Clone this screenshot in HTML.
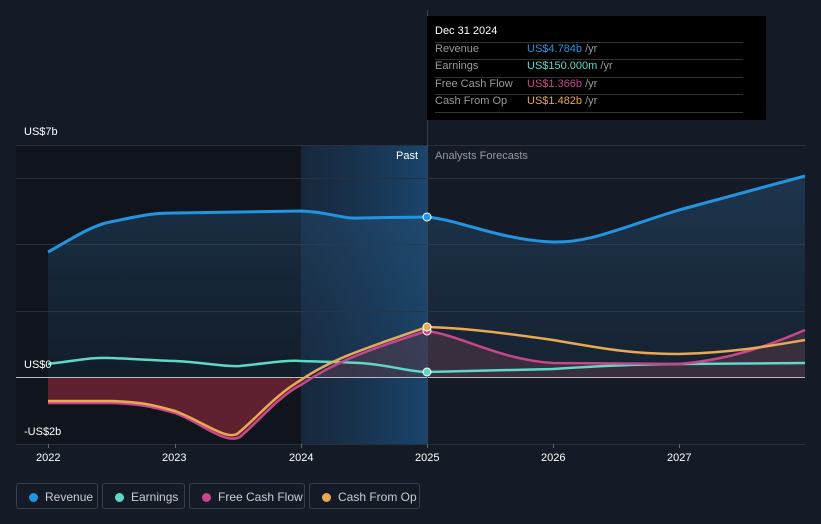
<!DOCTYPE html><html><head><style>
body{margin:0;width:821px;height:524px;background:#151b26;font-family:"Liberation Sans",sans-serif;overflow:hidden;position:relative}
.t{position:absolute;font-size:11px;color:#fff}
.tip{position:absolute;left:427px;top:16px;width:339px;height:104px;background:#000}
.tip div{position:absolute;left:8px;font-size:11px;color:#999}
.tip .l{height:1px;background:#333;width:308px}
.leg{position:absolute;top:483px;height:26px;border:1px solid #3a404b;border-radius:3px;color:#ccc;font-size:12px;line-height:26px;box-sizing:border-box}
.leg i{position:absolute;left:12px;top:9px;width:9px;height:9px;border-radius:50%}
.leg span{position:absolute;left:28px}
</style></head><body>
<svg width="821" height="524" style="position:absolute;left:0;top:0">
<defs><linearGradient id="hb" x1="0" x2="1"><stop offset="0" stop-color="#1a3a5a" stop-opacity=".4"/><stop offset="1" stop-color="#1a4a75" stop-opacity=".9"/></linearGradient>
<linearGradient id="rv" x1="0" y1="0" x2="0" y2="1"><stop offset="0" stop-color="#2a5a85" stop-opacity=".7"/><stop offset="1" stop-color="#1a3550" stop-opacity=".45"/></linearGradient></defs>
<rect x="16" y="145" width="285" height="299" fill="#10151d"/>
<rect x="301" y="145" width="126" height="299" fill="url(#hb)"/>
<g stroke="#2a303b" stroke-width="1"><line x1="16" y1="145.5" x2="805" y2="145.5"/><line x1="16" y1="178.5" x2="805" y2="178.5"/><line x1="16" y1="244.5" x2="805" y2="244.5"/><line x1="16" y1="311.5" x2="805" y2="311.5"/><line x1="16" y1="444.5" x2="805" y2="444.5"/></g>
<path d="M48,252 C70,240 90,226 110,222 C140,216 150,213 175,213 L301,211 C330,212 340,219 360,218 L427,217 C460,220 500,240 553,242 C590,243 620,228 679,210 L805,176 L805,377 L48,377Z" fill="url(#rv)" opacity=".6"/>
<path d="M48,403 L110,403 C140,404 150,406 175,413 C200,422 225,445 240,437 C260,420 280,395 301,385 L301,377 L48,377Z" fill="#7a2535" opacity=".75"/>
<path d="M301,385 C330,365 360,352 427,330 C460,335 500,360 553,363 L679,364 C730,360 770,345 805,330 L805,377 L301,377Z" fill="#5a3a48" opacity=".5"/>
<line x1="16" y1="377.5" x2="805" y2="377.5" stroke="#b8bcc2"/>
<line x1="427.5" y1="10" x2="427.5" y2="444" stroke="#3a4250"/>
<path d="M48,252 C70,240 90,226 110,222 C140,216 150,213 175,213 L301,211 C330,212 340,219 360,218 L427,217 C460,220 500,240 553,242 C590,243 620,228 679,210 L805,176" fill="none" stroke="#2394df" stroke-width="3"/>
<path d="M48,364 C80,360 95,357 110,358 C140,359 160,361 175,361 C210,363 225,367 240,366 C270,363 285,360 301,361 C330,362 345,362 360,363 C390,365 410,372 427,372 L553,369 C600,366 640,364 679,364 L805,363" fill="none" stroke="#5fd8c8" stroke-width="2.5"/>
<path d="M48,403 L110,403 C140,404 150,406 175,413 C200,422 225,445 240,437 C260,420 280,395 301,385 C330,365 360,352 427,331 C460,335 500,360 553,363 L679,364 C730,360 770,345 805,330" fill="none" stroke="#c8478a" stroke-width="2.5"/>
<path d="M48,401 L110,401 C140,402 150,404 175,411 C200,420 225,440 237,434 C255,420 275,395 301,380 C330,360 360,350 427,327 C460,328 490,331 553,340 C600,348 630,354 679,354 C730,353 770,346 805,340" fill="none" stroke="#e8a955" stroke-width="2.5"/>
<circle cx="427" cy="217" r="4" fill="#2394df" stroke="#fff"/>
<circle cx="427" cy="372" r="4" fill="#5fd8c8" stroke="#fff"/>
<circle cx="427" cy="331" r="4" fill="#c8478a" stroke="#fff"/>
<circle cx="427" cy="327" r="4" fill="#e8a955" stroke="#fff"/>
<g stroke="#666"><line x1="48.5" y1="444" x2="48.5" y2="448"/><line x1="175.5" y1="444" x2="175.5" y2="448"/><line x1="301.5" y1="444" x2="301.5" y2="448"/><line x1="427.5" y1="444" x2="427.5" y2="448"/><line x1="553.5" y1="444" x2="553.5" y2="448"/><line x1="679.5" y1="444" x2="679.5" y2="448"/></g>
</svg>
<div class="t" style="left:24px;top:126px">US$7b</div>
<div class="t" style="left:24px;top:359px">US$0</div>
<div class="t" style="left:24px;top:426px">-US$2b</div>
<div class="t" style="left:396px;top:150px">Past</div>
<div class="t" style="left:435px;top:150px;color:#999">Analysts Forecasts</div>
<div class="t" style="left:36px;top:452px">2022</div>
<div class="t" style="left:162px;top:452px">2023</div>
<div class="t" style="left:289px;top:452px">2024</div>
<div class="t" style="left:415px;top:452px">2025</div>
<div class="t" style="left:541px;top:452px">2026</div>
<div class="t" style="left:667px;top:452px">2027</div>
<div class="tip">
<div style="top:9px;color:#fff">Dec 31 2024</div>
<div class="l" style="top:26px"></div>
<div style="top:27px">Revenue</div><div style="top:27px;left:100px;color:#2394df">US$4.784b <span style="color:#999">/yr</span></div>
<div class="l" style="top:43px"></div>
<div style="top:44px">Earnings</div><div style="top:44px;left:100px;color:#5fd8c8">US$150.000m <span style="color:#999">/yr</span></div>
<div class="l" style="top:61px"></div>
<div style="top:62px">Free Cash Flow</div><div style="top:62px;left:100px;color:#c8478a">US$1.366b <span style="color:#999">/yr</span></div>
<div class="l" style="top:78px"></div>
<div style="top:79px">Cash From Op</div><div style="top:79px;left:100px;color:#e8a955">US$1.482b <span style="color:#999">/yr</span></div>
<div class="l" style="top:96px"></div>
</div>
<div class="leg" style="left:16px;width:82px"><i style="background:#2394df"></i><span>Revenue</span></div>
<div class="leg" style="left:102px;width:83px"><i style="background:#5fd8c8"></i><span>Earnings</span></div>
<div class="leg" style="left:189px;width:116px"><i style="background:#c8478a"></i><span>Free Cash Flow</span></div>
<div class="leg" style="left:309px;width:111px"><i style="background:#e8a955"></i><span>Cash From Op</span></div>
</body></html>
